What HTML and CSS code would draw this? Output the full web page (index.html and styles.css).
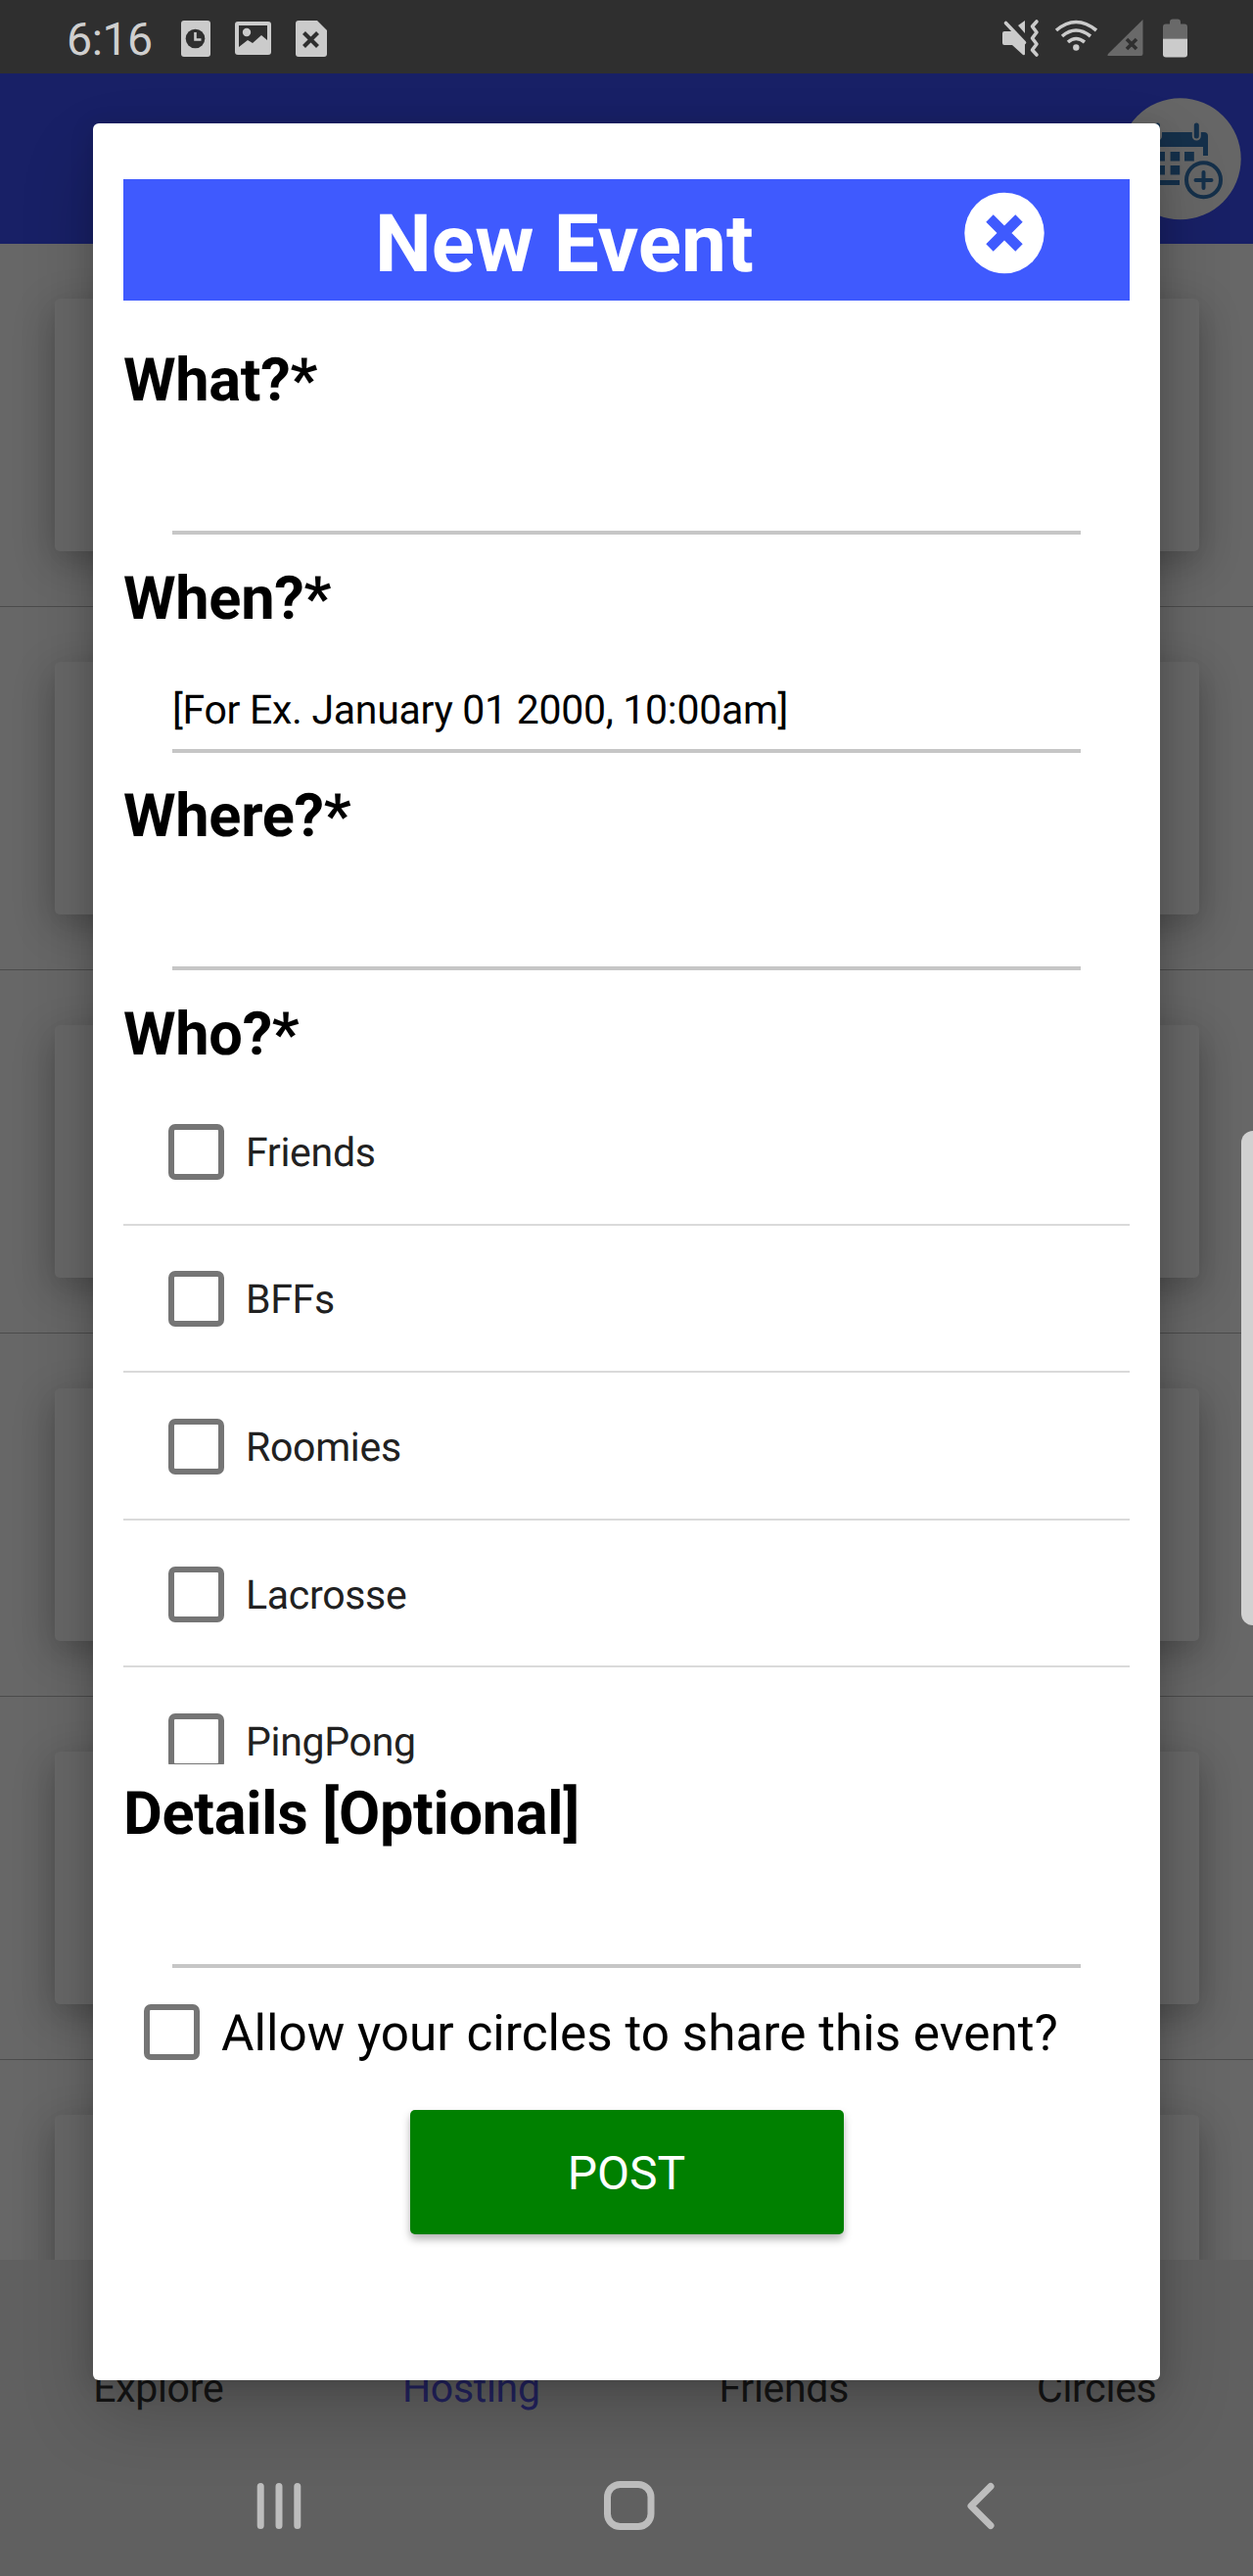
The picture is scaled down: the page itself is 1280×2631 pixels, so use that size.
FILE: index.html
```html
<!DOCTYPE html>
<html lang="en">
<head>
<meta charset="utf-8">
<title>New Event</title>
<link rel="stylesheet" href="styles.css">
</head>
<body>
<div class="screen">
  <header class="status">
    <span class="time">6:16</span>
    <svg class="status-left" width="152" height="40" viewBox="184 20 152 40">
      <g fill="#cbcbcb">
        <rect x="185" y="21" width="30" height="37" rx="3"/>
        <path d="M243 22h31a3 3 0 0 1 3 3v28a3 3 0 0 1-3 3h-31a3 3 0 0 1-3-3v-28a3 3 0 0 1 3-3z"/>
        <path d="M305 21h19l10 10v24a3 3 0 0 1-3 3h-26a3 3 0 0 1-3-3v-31a3 3 0 0 1 3-3z"/>
      </g>
      <circle cx="199.500" cy="39.500" r="9.800" fill="#2f2f2f"/>
      <path d="M199.500 33v7.500h6" fill="none" stroke="#cbcbcb" stroke-width="2.600"/>
      <path d="M244 26h29v15l-6-5-9 8-5-3-9 7z" fill="#2f2f2f"/>
      <circle cx="252" cy="33" r="4.200" fill="#cbcbcb"/>
      <path d="M310.500 33.500l14 14M324.500 33.500l-14 14" stroke="#2f2f2f" stroke-width="4.200"/>
    </svg>
    <svg class="status-right" width="194" height="42" viewBox="1022 18 194 42">
      <path d="M1024 34q0-2 2-2h8l13 13v10q0 2-2 1l-11-10h-8q-2 0-2-2z" fill="#cbcbcb"/>
      <path d="M1027.500 23.500l19 20" stroke="#cbcbcb" stroke-width="3.600" stroke-linecap="round"/>
      <path d="M1047 21v13l-7-8z" fill="#cbcbcb"/>
      <path d="M1059 22l-4.500 5 4.500 6-4.500 6 4.500 6-4.500 6 4.500 5" fill="none" stroke="#cbcbcb" stroke-width="3.600" stroke-linecap="round" stroke-linejoin="round"/>
      <g fill="none" stroke="#cbcbcb" stroke-width="3.600">
        <path d="M1079 31q20-17 41 0"/><path d="M1085 37q14-12 29 0"/><path d="M1091 43q8-7 17 0"/>
      </g>
      <circle cx="1099.300" cy="48.500" r="3.200" fill="#cbcbcb"/>
      <path d="M1167.500 20v35q0 2-2 2h-33q-2 0-.5-2z" fill="#696969"/>
      <path d="M1151 40l10 10M1161 40l-10 10" stroke="#2f2f2f" stroke-width="3.600"/>
      <path d="M1188 39.500v-12q0-3 3-3h4v-2q0-3 3-3h5q3 0 3 3v2h4q3 0 3 3v12z" fill="#696969"/>
      <path d="M1188 39.500h25v16q0 3-3 3h-19q-3 0-3-3z" fill="#cbcbcb"/>
    </svg>
  </header>

  <div class="app-bar">
    <svg class="add-event" width="124" height="125" viewBox="1144 100 124 125">
      <circle cx="1205.700" cy="162.300" r="62" fill="#666"/>
      <g fill="#15304a">
        <path d="M1168 150v-11q0-4 4-4h58q4 0 4 4v20h-5v-9z"/>
        <path d="M1168 150h5v34h32v5h-33q-4 0-4-4z"/>
        <path d="M1180 155h10v9.500h-10zM1195.600 155h9.600v9.500h-9.600zM1210 155h9.800v9.500h-9.800zM1180 169h10v9.500h-10zM1195.600 169h9.600v9.500h-9.600z"/>
      </g>
      <g stroke-linecap="round">
        <path d="M1222.300 129v10M1182.500 129v10" stroke="#666" stroke-width="9"/>
        <path d="M1222.300 128v11M1182.500 128v11" stroke="#15304a" stroke-width="5"/>
      </g>
      <circle cx="1229.500" cy="183.700" r="17.500" fill="#666" stroke="#15304a" stroke-width="4"/>
      <path d="M1221.500 184h16M1229.500 176v16" stroke="#15304a" stroke-width="4" stroke-linecap="round"/>
    </svg>
  </div>

  <main class="feed">
    <div class="feed-row"><div class="card"></div></div>
    <div class="feed-row"><div class="card"></div></div>
    <div class="feed-row"><div class="card"></div></div>
    <div class="feed-row"><div class="card"></div></div>
    <div class="feed-row"><div class="card"></div></div>
    <div class="feed-row"><div class="card"></div></div>
  </main>

  <nav class="tabs">
    <span class="tab">Explore</span>
    <span class="tab tab-active">Hosting</span>
    <span class="tab">Friends</span>
    <span class="tab">Circles</span>
  </nav>

  <section class="dialog">
    <div class="title-bar">
      <h1 class="title">New Event</h1>
      <svg class="close" width="82" height="84" viewBox="0 0 82 84">
        <ellipse cx="41" cy="42" rx="40.700" ry="41.300" fill="#fff"/>
        <path d="M26 27l30 30M56 27l-30 30" stroke="#3f5afe" stroke-width="10.500"/>
      </svg>
    </div>

    <div class="field"><label class="label">What?*</label><div class="input"></div></div>
    <div class="field"><label class="label">When?*</label><div class="input">[For Ex. January 01 2000, 10:00am]</div></div>
    <div class="field"><label class="label">Where?*</label><div class="input"></div></div>

    <label class="label label-who">Who?*</label>
    <div class="circles">
      <div class="circle-row"><span class="box"></span><span class="circle-name">Friends</span></div>
      <div class="circle-row"><span class="box"></span><span class="circle-name">BFFs</span></div>
      <div class="circle-row"><span class="box"></span><span class="circle-name">Roomies</span></div>
      <div class="circle-row"><span class="box"></span><span class="circle-name">Lacrosse</span></div>
      <div class="circle-row"><span class="box"></span><span class="circle-name">PingPong</span></div>
    </div>

    <div class="field field-details"><label class="label">Details [Optional]</label><div class="input"></div></div>
    <div class="share"><span class="box"></span><span class="share-text">Allow your circles to share this event?</span></div>
    <button class="post">POST</button>
  </section>

  <footer class="system-nav">
    <svg width="1280" height="60" viewBox="0 2530 1280 60" fill="none" stroke="#bdbdbd" stroke-width="7" stroke-linecap="round" stroke-linejoin="round">
      <path d="M266.200 2539.500v40M285 2539.500v40M303.800 2539.500v40"/>
      <rect x="620.500" y="2537.500" width="44.500" height="43" rx="13"/>
      <path d="M1012 2539.500l-20 20 20 20"/>
    </svg>
  </footer>
  <div class="edge-handle"></div>
</div>
</body>
</html>
```
FILE: styles.css
```css
* { box-sizing: border-box; }

body {
  margin: 0;
  font-family: Roboto, "Liberation Sans", sans-serif;
  text-rendering: geometricPrecision;
}

.screen {
  position: relative;
  display: flex;
  flex-direction: column;
  width: 1280px;
  height: 2631px;
  overflow: hidden;
  background: #606060;
}

.status {
  display: flex;
  align-items: flex-start;
  height: 75px;
  padding: 0 64px 0 68px;
  background: #2f2f2f;
}

.time {
  width: 116px;
  padding-top: 14px;
  font-size: 46.5px;
  line-height: 55px;
  letter-spacing: -.5px;
  color: #cfcfcf;
}

.status-left { margin-top: 20px; }
.status-right { margin: 18px 0 0 auto; }

.app-bar {
  display: flex;
  justify-content: flex-end;
  height: 174px;
  padding: 25px 12px 0 0;
  background: #182066;
}

.feed {
  height: 2059px;
  overflow: hidden;
  background: #676767;
}

.feed-row {
  height: 371px;
  padding: 56px 55px 0 56px;
  border-bottom: 1px solid #4b4b4b;
}

.card {
  height: 258px;
  border-radius: 5px;
  background: #676767;
  box-shadow: 0 12px 44px rgba(0, 0, 0, .24), 0 10px 24px rgba(0, 0, 0, .05);
}

.tabs {
  display: flex;
  height: 200px;
  padding: 108px 0 0 2px;
  font-size: 41px;
  line-height: 48px;
  letter-spacing: -.3px;
  color: #151515;
}

.tab { flex: 1; text-align: center; }
.tab-active { color: #23235f; }

.dialog {
  position: absolute;
  left: 95px;
  top: 126px;
  width: 1090px;
  height: 2305px;
  padding: 57px 31px 0;
  border-radius: 6px;
  background: #fff;
  color: #000;
  box-shadow: 0 36px 75px rgba(0, 0, 0, .2), 0 4px 24px rgba(0, 0, 0, .14);
}

.title-bar {
  display: flex;
  align-items: flex-start;
  height: 124px;
  margin-bottom: 37px;
  background: #3f5afe;
}

.title {
  margin: 0;
  width: 859px;
  padding: 19px 0 0 257px;
  font-size: 82px;
  line-height: 96px;
  font-weight: 700;
  color: #fff;
  white-space: nowrap;
}

.close { margin-top: 13px; }

.field { height: 222.7px; }

.label {
  display: block;
  font-size: 61.3px;
  line-height: 88px;
  font-weight: 700;
  letter-spacing: -.3px;
}

.input {
  height: 114px;
  margin: 0 50px;
  padding-top: 47px;
  border-bottom: 4px solid #c6c6c6;
  font-size: 41px;
  line-height: 48px;
  letter-spacing: -.3px;
}

.label-who { height: 88px; }

.circles {
  height: 702px;
  padding-top: 1px;
  overflow: hidden;
  font-size: 41px;
  color: #212121;
}

.circle-row {
  display: flex;
  align-items: center;
  gap: 21px;
  height: 150.6px;
  padding-left: 46px;
  padding-top: 2px;
  border-bottom: 2px solid #dadada;
}

.circle-name {
  padding: 3px 0 0 1px;
  letter-spacing: -.3px;
}

.box {
  width: 57px;
  height: 57px;
  border: 6px solid #757575;
  border-radius: 7px;
}

.field-details {
  height: 244.7px;
  padding-top: 5.5px;
}

.share {
  display: flex;
  align-items: center;
  gap: 22px;
  height: 57px;
  padding-left: 21px;
}

.share-text {
  padding-top: 3px;
  font-size: 51.3px;
  line-height: 60px;
  white-space: nowrap;
}

.post {
  display: block;
  width: 443px;
  height: 127px;
  margin: 51px auto 0;
  padding: 4px 0 0;
  border: 0;
  border-radius: 5px;
  background: #008000;
  color: #fff;
  font: 400 48px/56px Roboto, "Liberation Sans", sans-serif;
  box-shadow: 0 5px 8px rgba(0, 0, 0, .3);
}

.system-nav {
  height: 60px;
  margin-top: 22px;
}

.edge-handle {
  position: absolute;
  right: 0;
  top: 1155px;
  width: 12px;
  height: 505px;
  border-radius: 16px 0 0 16px;
  background: #d1d1d1;
}
```
